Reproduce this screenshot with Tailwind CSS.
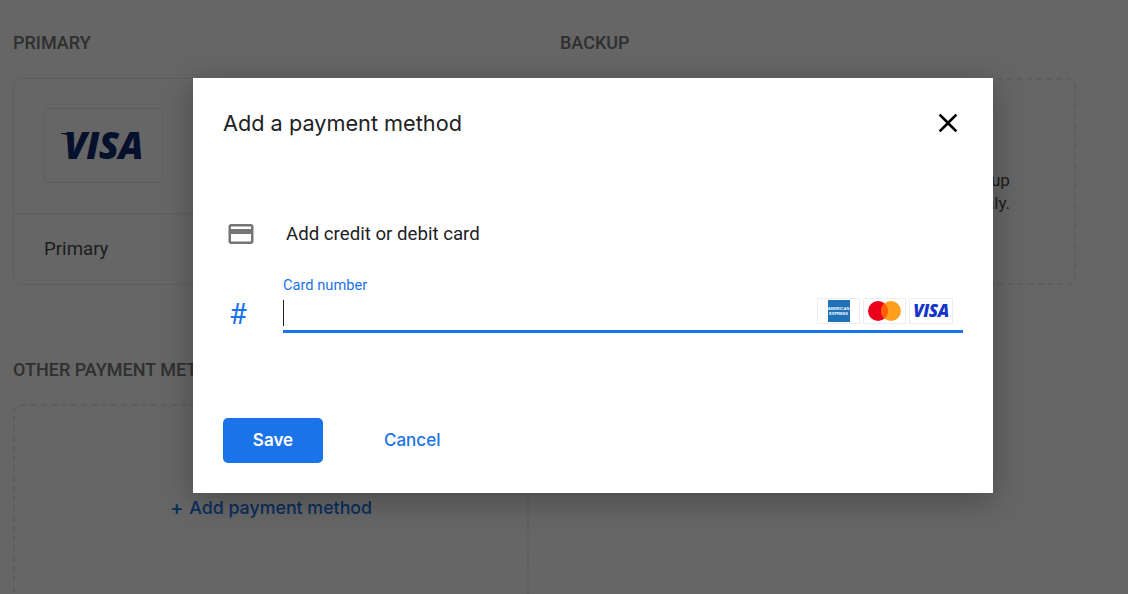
<!DOCTYPE html>
<html lang="en">
<head>
<meta charset="utf-8">
<title>Add a payment method</title>
<script src="https://cdn.jsdelivr.net/npm/@tailwindcss/browser@4"></script>
</head>
<body class="bg-white font-['Roboto',sans-serif]">
<div class="relative h-[594px] w-[1128px] overflow-hidden">
  <main class="px-[13px] pt-[33px] grid grid-cols-[516px_516px] gap-x-[31px] content-start">
    <section>
      <h2 class="text-lg leading-5 font-medium text-[#777]">PRIMARY</h2>
      <div class="mt-[25px] h-[207px] rounded-lg border border-[#e8eaed]">
        <div class="h-[135px] border-b border-[#e8eaed] pt-[29px] pl-[30px]">
          <div class="flex h-[75px] w-[119px] items-center justify-center rounded border border-[#e8eaed] pb-[3px]">
            <span class="relative font-['Open_Sans',sans-serif] text-[37px] leading-none font-extrabold italic tracking-[-0.5px] text-[#0a2a6e]">VISA<svg class="absolute left-[-3px] top-[7px] h-[6px] w-[12px]" viewBox="0 0 12 6"><path d="M0 0h9l3 6C9 3 5 1 0 1z" fill="#0a2a6e"/></svg></span>
          </div>
        </div>
        <div class="pl-[30px] pt-[23px] text-[18.67px] leading-6 text-[#4a4a4a]">Primary</div>
      </div>
    </section>
    <section>
      <h2 class="text-lg leading-5 font-medium text-[#777]">BACKUP</h2>
      <div class="mt-[25px] flex h-[207px] items-center justify-center rounded-lg border-2 border-dashed border-[#e8eaed] pt-[20px]">
        <p class="text-center text-[17px] leading-[23px] whitespace-nowrap text-[#4a4a4a]">If your primary payment fails, we'll use your backup<br>method so your ads can keep on running smoothly.</p>
      </div>
    </section>
    <section class="mt-[75px]">
      <h2 class="text-lg leading-5 font-medium whitespace-nowrap text-[#777]">OTHER PAYMENT METHODS</h2>
      <div class="mt-[24px] flex h-[260px] items-start justify-center rounded-lg border-2 border-dashed border-[#e8eaed] pt-[90px]">
        <span class="flex items-center gap-[6px] font-['Inter',sans-serif] text-[17.8px] leading-6 font-medium text-[#1a73e8]"><span class="text-xl leading-6">+</span>Add payment method</span>
      </div>
    </section>
  </main>

  <div class="absolute inset-0 flex justify-center bg-black/60 pl-[58px] pt-[78px]">
    <div role="dialog" class="flex h-[415px] w-[800px] flex-col bg-white pl-[30px] pr-[30px] shadow-[0_6px_30px_rgba(0,0,0,0.3)]">
      <header class="flex h-[90px] items-center justify-between">
        <h1 class="font-['Inter',sans-serif] text-[21.7px] leading-7 font-normal text-[#202124]">Add a payment method</h1>
        <svg class="mr-[-1px] h-8 w-8 text-black" viewBox="0 0 24 24" fill="currentColor"><path d="M19 6.41L17.59 5 12 10.59 6.41 5 5 6.41 10.59 12 5 17.59 6.41 19 12 13.41 17.59 19 19 17.59 13.41 12z"/></svg>
      </header>
      <div class="mt-[51px] flex h-[30px] items-center">
        <svg class="ml-[3px] h-[30px] w-[30px] text-[#757575]" viewBox="0 0 24 24" fill="currentColor"><path d="M20 4H4c-1.11 0-1.99.89-1.99 2L2 18c0 1.11.89 2 2 2h16c1.11 0 2-.89 2-2V6c0-1.11-.89-2-2-2zm0 14H4v-6h16v6zm0-10H4V6h16v2z"/></svg>
        <span class="ml-[30px] text-[18.67px] leading-6 text-[#202124]">Add credit or debit card</span>
      </div>
      <div class="mt-[28px] flex">
        <div class="flex w-[60px] items-end pl-[6px] text-[29px] leading-[38px] text-[#1a73e8]">#</div>
        <div class="flex-1">
          <label class="block text-[14.67px] leading-[17px] text-[#1a73e8]">Card number</label>
          <div class="flex h-[39px] items-center justify-between border-b-[3px] border-[#1a73e8]">
            <span class="mt-[2px] h-[26px] w-px bg-[#202124]"></span>
            <div class="mt-[-3px] mr-[10px] flex gap-[3px]">
              <span class="flex h-[26px] w-[43px] items-center justify-center border border-[#eeeeee]">
                <span class="flex h-[22px] w-[22px] flex-col items-center justify-center bg-[#1f72b8] font-['Liberation_Sans',sans-serif] text-[4px] leading-[5px] font-bold text-white"><span>AMERICAN</span><span>EXPRESS</span></span>
              </span>
              <span class="flex h-[26px] w-[43px] items-center justify-center border border-[#eeeeee]">
                <svg class="h-[20px] w-[33px]" viewBox="0 0 33 20"><circle cx="10" cy="10" r="10" fill="#eb001b"/><circle cx="23" cy="10" r="10" fill="#ff9f1a"/><path d="M16.5 2.4a10 10 0 0 1 0 15.2a10 10 0 0 1 0-15.2z" fill="#ff5f00"/></svg>
              </span>
              <span class="flex h-[26px] w-[44px] items-center justify-center border border-[#eeeeee] font-['Open_Sans',sans-serif] text-[17px] leading-none font-extrabold italic tracking-[-0.5px] text-[#1434cb]">VISA</span>
            </div>
          </div>
        </div>
      </div>
      <div class="mt-[85px] flex items-center">
        <button class="h-[45px] w-[100px] rounded-[5px] bg-[#1a73e8] font-['Inter',sans-serif] text-[17px] font-semibold text-white">Save</button>
        <button class="ml-[61px] font-['Inter',sans-serif] text-[17px] font-medium text-[#1a73e8]">Cancel</button>
      </div>
    </div>
  </div>
</div>
</body>
</html>
